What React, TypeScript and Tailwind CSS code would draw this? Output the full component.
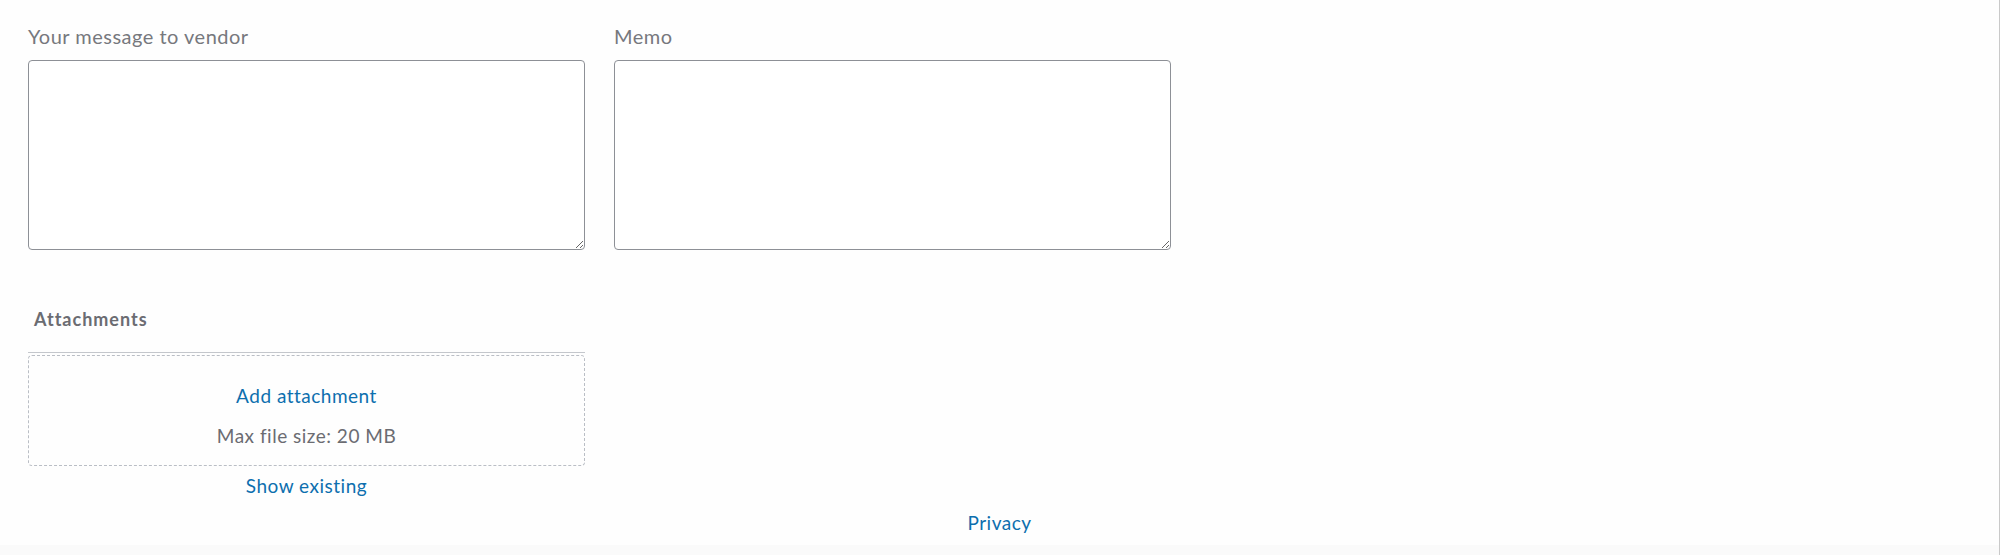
export default function App() {
    return (
        <div className="flex h-[555px] flex-col border-r border-[#c9c9c9] bg-[#fefefe] font-['Lato','Noto_Sans',sans-serif]">
            <main className="flex-1 px-[28px] pt-[23px]">
                {/* message + memo */}
                <div className="flex gap-[29px]">
                    <div className="flex w-[557px] flex-col">
                        <label className="mb-[11px] text-[20px] leading-[26px] tracking-[0.5px] text-[#76787d]">Your message to vendor</label>
                        <textarea className="h-[190px] w-full resize rounded-[4px] border border-[#8d9096] bg-white p-2 outline-none" />
                    </div>
                    <div className="flex w-[557px] flex-col">
                        <label className="mb-[11px] text-[20px] leading-[26px] tracking-[0.5px] text-[#76787d]">Memo</label>
                        <textarea className="h-[190px] w-full resize rounded-[4px] border border-[#8d9096] bg-white p-2 outline-none" />
                    </div>
                </div>

                {/* attachments */}
                <section className="mt-[57px] flex w-[557px] flex-col">
                    <h3 className="pl-[6px] text-[18px] font-bold leading-[24px] tracking-[1px] text-[#6b6c72]">Attachments</h3>
                    <div className="mt-[21px] border-t border-[#c4c7cc]" />
                    <div className="mt-[2px] flex h-[111px] flex-col items-center gap-[16px] rounded-[4px] border border-dashed border-[#babec5] pt-[28px]">
                        <button className="text-[19px] leading-[24px] tracking-[0.5px] text-[#0d6fae]">Add attachment</button>
                        <span className="text-[19px] leading-[24px] tracking-[0.5px] text-[#6b6c72]">Max file size: 20 MB</span>
                    </div>
                    <button className="mt-[8px] self-center text-[19px] leading-[24px] tracking-[0.5px] text-[#0d6fae]">Show existing</button>
                </section>

                <div className="mt-[13px] flex justify-center">
                    <a className="text-[19px] leading-[24px] tracking-[0.5px] text-[#0d6fae]">Privacy</a>
                </div>
            </main>
            <div className="h-[10px] bg-[#fafafa]" />
        </div>
    )
}
